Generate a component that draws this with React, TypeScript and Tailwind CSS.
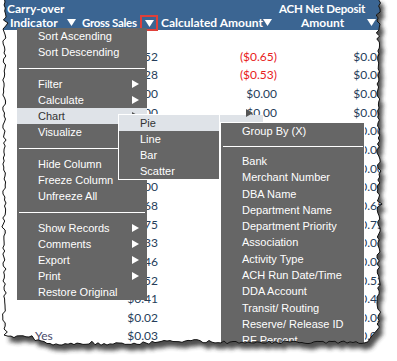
import React from "react";

function rng(seed: number) {
  let s = seed;
  return () => {
    s = (s * 1103515245 + 12345) % 2147483648;
    return s / 2147483648;
  };
}

function buildPaper(): string {
  const r = rng(7);
  const pts: [number, number][] = [];
  pts.push([4, -3]);
  pts.push([378, -3]);
  for (let y = 0; y <= 332; y += 3) {
    let x = 378.5 + (r() - 0.5) * 3.5;
    if (r() > 0.88) x += (r() - 0.3) * 5;
    pts.push([x, y]);
  }
  pts.push([371, 337]);
  const base = (x: number) => {
    if (x < 33) return 337;
    if (x < 46) return 340.5;
    if (x < 150) return 344;
    if (x < 215) return 341.5;
    return 342.5;
  };
  for (let x = 368; x >= 6; x -= 3) {
    let y = base(x) + (r() - 0.5) * 2.5;
    if (r() > 0.9) y -= r() * 2;
    pts.push([x, y]);
  }
  pts.push([4, 335]);
  for (let y = 332; y >= 0; y -= 3) {
    let x = 4.5 + (r() - 0.5) * 3.5;
    if (r() > 0.88) x += (r() - 0.5) * 5;
    pts.push([x, y]);
  }
  return "M" + pts.map((p) => `${p[0].toFixed(1)} ${p[1].toFixed(1)}`).join(" L") + " Z";
}

const Down = () => (
  <svg width="9" height="7" viewBox="0 0 9 7">
    <polygon points="0,0 9,0 4.5,7" fill="white" />
  </svg>
);

const Right = ({ color = "white" }: { color?: string }) => (
  <svg width="7" height="8" viewBox="0 0 7 8">
    <polygon points="0,0 7,4 0,8" fill={color} />
  </svg>
);

const gross = ["$0.52", "$0.28", "$0.00", "$0.00", "", "", "", "$0.00", "$0.68", "$0.75", "$0.33", "$0.46", "$0.52", "$0.41", "$0.02", "$0.03"];
const calc = ["($0.65)", "($0.53)", "$0.00", "$0.00", "", "", "", "", "", "", "", "", "", "", "", ""];
const ach = ["$0.00", "$0.00", "$0.00", "$0.00", "$0.00", "$0.00", "$0.00", "$0.00", "$0.65", "$0.75", "$0.03", "$0.06", "$0.52", "$0.41", "$0.02", "$0.03"];

type Item = { label: string; arrow?: boolean; hi?: boolean } | null;

const mainItems: Item[] = [
  { label: "Sort Ascending" },
  { label: "Sort Descending" },
  null,
  { label: "Filter", arrow: true },
  { label: "Calculate", arrow: true },
  { label: "Chart", arrow: true, hi: true },
  { label: "Visualize" },
  null,
  { label: "Hide Column" },
  { label: "Freeze Column" },
  { label: "Unfreeze All" },
  null,
  { label: "Show Records", arrow: true },
  { label: "Comments", arrow: true },
  { label: "Export", arrow: true },
  { label: "Print", arrow: true },
  { label: "Restore Original" },
];

const groupItems = [
  "Bank",
  "Merchant Number",
  "DBA Name",
  "Department Name",
  "Department Priority",
  "Association",
  "Activity Type",
  "ACH Run Date/Time",
  "DDA Account",
  "Transit/ Routing",
  "Reserve/ Release ID",
  "RF Percent",
];

const menuFont = { fontFamily: "'Liberation Sans', Arial, sans-serif" };

export default function App() {
  const paper = React.useMemo(buildPaper, []);
  const outside = `M-5 -5 H402 V366 H-5 Z ${paper}`;
  const hfont = { fontFamily: "Lato, 'Open Sans', sans-serif" };
  return (
    <div className="relative w-[397px] h-[361px] overflow-hidden bg-white">
      {/* header */}
      <div className="h-[30px] bg-[#3b6592] text-white font-bold text-[12px] leading-[15px] pt-[1px] whitespace-nowrap" style={hfont}>
        <div className="flex h-[14px]">
          <div className="w-[279px] pl-[7px]">Carry-over</div>
          <div className="text-[11.5px] tracking-[-0.2px]">ACH Net Deposit</div>
        </div>
        <div className="flex h-[15px] items-center">
          <div className="w-[82px] pl-[10px] flex items-center">
            <span className="w-[57px]">Indicator</span>
            <Down />
          </div>
          <div className="w-[79px] flex items-center">
            <span className="w-[58px] text-[11.5px] tracking-[-0.3px]">Gross Sales</span>
            <div className="w-[18px] h-[16px] border-2 border-[#e0403a] flex items-center justify-center mt-[1px]">
              <Down />
            </div>
          </div>
          <div className="w-[139px] flex items-center">
            <span className="w-[102px]">Calculated Amount</span>
            <Down />
          </div>
          <div className="flex items-center">
            <span className="w-[67px] pl-[1px]">Amount</span>
            <Down />
          </div>
        </div>
      </div>
      {/* body */}
      <div className="h-[17.3px]" />
      <div className="text-[12px] text-[#263d5a] whitespace-nowrap" style={hfont}>
        {gross.map((g, i) => (
          <div key={i} className="flex h-[18.67px] items-center">
            <div className="w-[80px] pl-[35px] text-[#4a4a6a]">{i === 15 ? "Yes" : ""}</div>
            <div className="w-[78px] text-right">{g}</div>
            <div className={`w-[119px] text-right ${i < 2 ? "text-[#e8201c]" : ""}`}>{calc[i]}</div>
            <div className="w-[107px] text-right">{ach[i]}</div>
          </div>
        ))}
      </div>

      {/* chart highlight extension */}
      <div className="absolute left-[147px] top-[115px] w-[116px] h-[8px] bg-[#dfe3e8]" />
      <div className="absolute left-[246px] top-[109px]">
        <Right color="#555" />
      </div>

      {/* main menu */}
      <div className="absolute left-[17px] top-[28px] w-[130px] bg-[#666666] text-white text-[11px]" style={menuFont}>
        {mainItems.map((it, i) =>
          it === null ? (
            <div key={i} className="h-[16px] flex items-center px-[2px]">
              <div className="h-px w-full bg-white" />
            </div>
          ) : (
            <div
              key={i}
              className={`h-[16px] flex items-center pl-[21px] pr-[8px] ${it.hi ? "bg-[#dfe3e8] text-[#333]" : ""}`}
            >
              <span className="flex-1">{it.label}</span>
              {it.arrow && <Right color={it.hi ? "#555" : "white"} />}
            </div>
          )
        )}
      </div>

      {/* chart submenu */}
      <div className="absolute left-[118px] top-[114px] w-[102px] border border-white bg-[#666666] text-white text-[11px]" style={menuFont}>
        {["Pie", "Line", "Bar", "Scatter"].map((t, i) => (
          <div key={t} className={`h-[16px] flex items-center pl-[21px] ${i === 0 ? "bg-[#dfe3e8] text-[#333]" : ""}`}>
            {t}
          </div>
        ))}
      </div>

      {/* group by submenu */}
      <div className="absolute left-[220px] top-[122px] w-[145px] h-[260px] border border-white bg-[#666666] text-white text-[11px]" style={menuFont}>
        <div className="h-[16px] flex items-center pl-[21px]">Group By (X)</div>
        <div className="h-[14px] flex items-center pl-[2px] pr-[1px]">
          <div className="h-px w-full bg-white" />
        </div>
        {groupItems.map((t) => (
          <div key={t} className="h-[16.3px] flex items-center pl-[21px]">
            {t}
          </div>
        ))}
      </div>

      {/* torn paper edge overlay */}
      <svg className="absolute inset-0 pointer-events-none" width="397" height="361" viewBox="0 0 397 361">
        <defs>
          <clipPath id="outside">
            <path d={outside} clipRule="evenodd" />
          </clipPath>
          <filter id="blur" x="-10%" y="-10%" width="120%" height="120%">
            <feGaussianBlur stdDeviation="2.2" />
          </filter>
        </defs>
        <path d={outside} fill="white" fillRule="evenodd" />
        <g clipPath="url(#outside)">
          <path d={paper} transform="translate(4 6)" fill="#2e2e2e" opacity="0.85" filter="url(#blur)" />
        </g>
        <path d={paper} fill="none" stroke="#111" strokeWidth="1" />
      </svg>
    </div>
  );
}
